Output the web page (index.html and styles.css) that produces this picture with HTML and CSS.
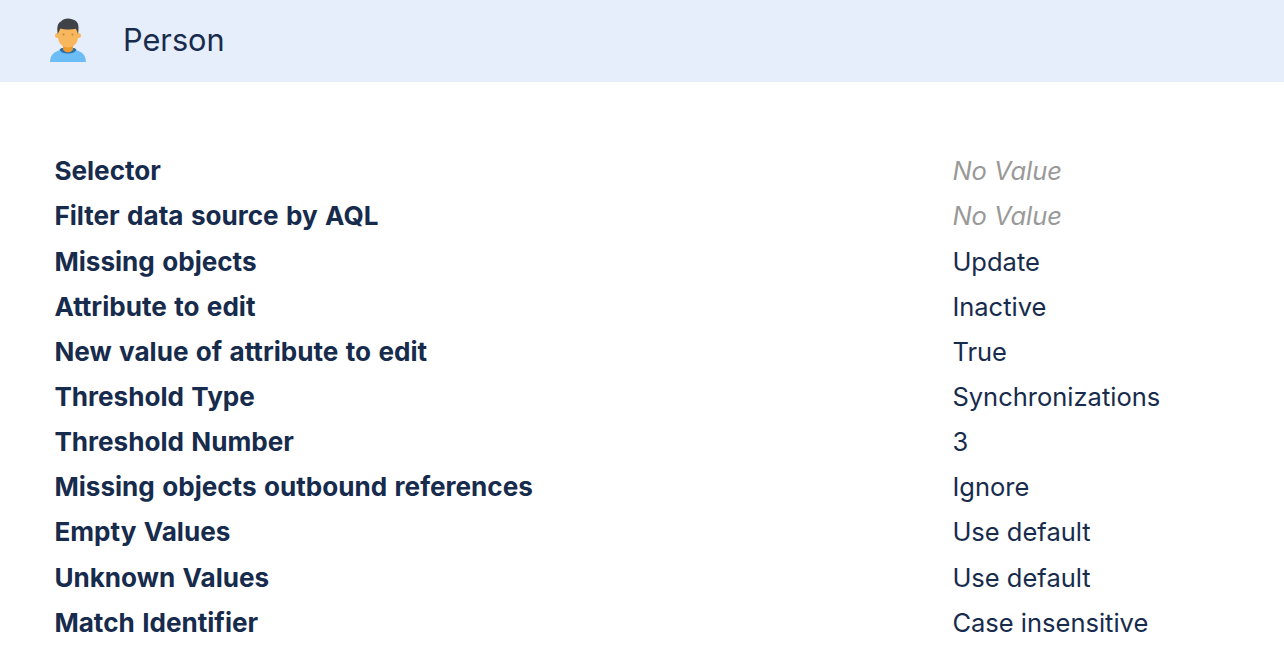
FILE: index.html
```html
<!DOCTYPE html>
<html lang="en">
<head>
    <meta charset="UTF-8">
    <title>Person</title>
    <link rel="stylesheet" href="styles.css">
</head>
<body>
    <div class="header">
        <svg class="avatar" viewBox="0 0 38 46" width="38" height="46">
            <path fill="#6cbcf5" d="M1 45C1.500 39.500 3 36.500 7.500 34.500L14 31.500h10l6.500 3c4.500 2 6 5 6.500 10.500z"/>
            <path fill="#2f6fa8" d="M12.500 31h13l2 1.500C26 35.500 23 36.500 19 36.500s-7-1-8.500-4z"/>
            <path fill="#ee9a2c" d="M14 26h10v5.500c0 2-2.200 3.800-5 3.800s-5-1.800-5-3.800z"/>
            <path fill="#f8b75c" d="M9 11h20v9c0 6-4.500 10.500-10 10.500S9 26 9 20z"/>
            <circle fill="#f8b75c" cx="8.500" cy="18.500" r="2.500"/>
            <circle fill="#f8b75c" cx="29.500" cy="18.500" r="2.500"/>
            <path fill="#3f4246" d="M8.800 17C7.500 10 9 5.500 12 4.500c2-2.800 7-3.800 11-2.300 4.200 1 6.500 3.500 6.500 8 0 2.500 0 4.800-.6 6.800-.4-2-1-3.800-2-5.300-4.500 1.200-11 1-15.500-.2-1 1.700-1.600 3.500-2.600 5.500z"/>
            <circle fill="#c08a45" cx="14.500" cy="17.500" r="1.100"/>
            <circle fill="#c08a45" cx="23.500" cy="17.500" r="1.100"/>
        </svg>
        <span class="title">Person</span>
    </div>

    <div class="props">
        <div class="name">Selector</div><div class="empty">No Value</div>
        <div class="name">Filter data source by AQL</div><div class="empty">No Value</div>
        <div class="name">Missing objects</div><div>Update</div>
        <div class="name">Attribute to edit</div><div>Inactive</div>
        <div class="name">New value of attribute to edit</div><div>True</div>
        <div class="name">Threshold Type</div><div>Synchronizations</div>
        <div class="name">Threshold Number</div><div>3</div>
        <div class="name">Missing objects outbound references</div><div>Ignore</div>
        <div class="name">Empty Values</div><div>Use default</div>
        <div class="name">Unknown Values</div><div>Use default</div>
        <div class="name">Match Identifier</div><div>Case insensitive</div>
    </div>
</body>
</html>
```

FILE: styles.css
```css
body {
    margin: 0;
    font-family: Inter, "Liberation Sans", sans-serif;
    color: #172b4d;
    background: #fff;
    overflow: hidden;
}
.header {
    display: flex;
    align-items: center;
    height: 82px;
    padding-left: 49px;
    background: #e6edfb;
}
.avatar {
    margin-bottom: 2px;
}
.title {
    margin-bottom: 4px;
    margin-left: 36px;
    font-size: 30.7px;
}
.props {
    display: grid;
    grid-template-columns: 898px 1fr;
    grid-auto-rows: 45.15px;
    align-items: center;
    margin-top: 66.2px;
    padding-left: 54.4px;
    font-size: 25.5px;
}
.name {
    font-size: 26.1px;
    font-weight: 700;
    word-spacing: 1.2px;
}
.empty {
    color: #999;
    font-style: italic;
}
```
